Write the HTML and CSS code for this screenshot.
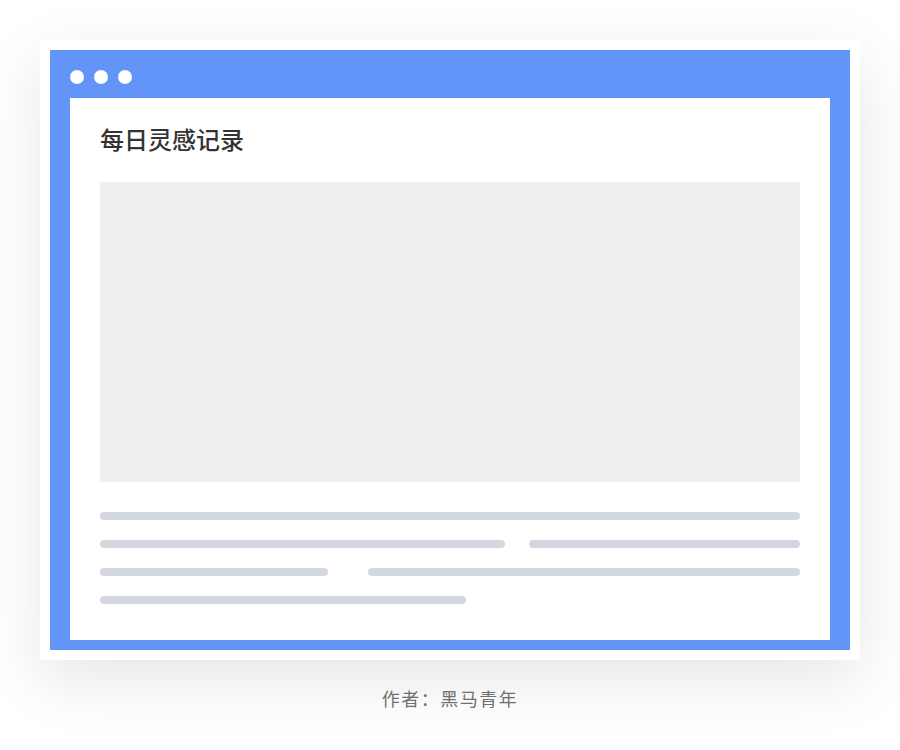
FILE: index.html
```html
<!DOCTYPE html>
<html lang="zh-CN">
  <head>
    <meta charset="UTF-8" />
    <title>每日灵感记录</title>
    <link rel="stylesheet" href="styles.css">
  </head>
  <body>
    <div class="card">
      <div class="browser">
        <div class="dots">
          <span class="dot"></span>
          <span class="dot"></span>
          <span class="dot"></span>
        </div>
        <div class="page">
          <h1>每日灵感记录</h1>
          <div class="cover"></div>
          <div class="lines">
            <div class="row"><span class="bar" style="width: 700px"></span></div>
            <div class="row"><span class="bar" style="width: 405px"></span><span class="bar" style="width: 271px; margin-left: 24px"></span></div>
            <div class="row"><span class="bar" style="width: 228px"></span><span class="bar" style="width: 432px; margin-left: 40px"></span></div>
            <div class="row"><span class="bar" style="width: 366px"></span></div>
          </div>
        </div>
      </div>
    </div>
    <p class="author">作者：黑马青年</p>
  </body>
</html>
```

FILE: styles.css
```css
body {
  margin: 0;
  padding: 40px;
  background: white;
  font-family: "Noto Sans CJK SC", "Noto Sans", sans-serif;
}

.card {
  width: 820px;
  box-sizing: border-box;
  padding: 10px;
  background: white;
  box-shadow: 0 20px 60px rgba(0, 0, 0, 0.1);
}

.browser {
  background: #6395f9;
  padding: 0 20px 10px;
}

.dots {
  display: flex;
  gap: 10px;
  align-items: center;
  height: 42px;
  padding-top: 6px;
}

.dot {
  width: 14px;
  height: 14px;
  border-radius: 50%;
  background: white;
}

.page {
  background: white;
  padding: 22px 30px 36px;
}

h1 {
  margin: 0 0 24px;
  font-size: 24px;
  line-height: 38px;
  font-weight: 500;
  color: #333;
}

.cover {
  height: 300px;
  background: #eeeff1;
}

.lines {
  margin-top: 30px;
  display: flex;
  flex-direction: column;
  gap: 20px;
}

.row {
  display: flex;
}

.bar {
  height: 8px;
  border-radius: 4px;
  background: #d3d7e0;
}

.author {
  margin: 25px 0 0;
  text-align: center;
  font-size: 18px;
  letter-spacing: 1.5px;
  color: #707070;
}
```
